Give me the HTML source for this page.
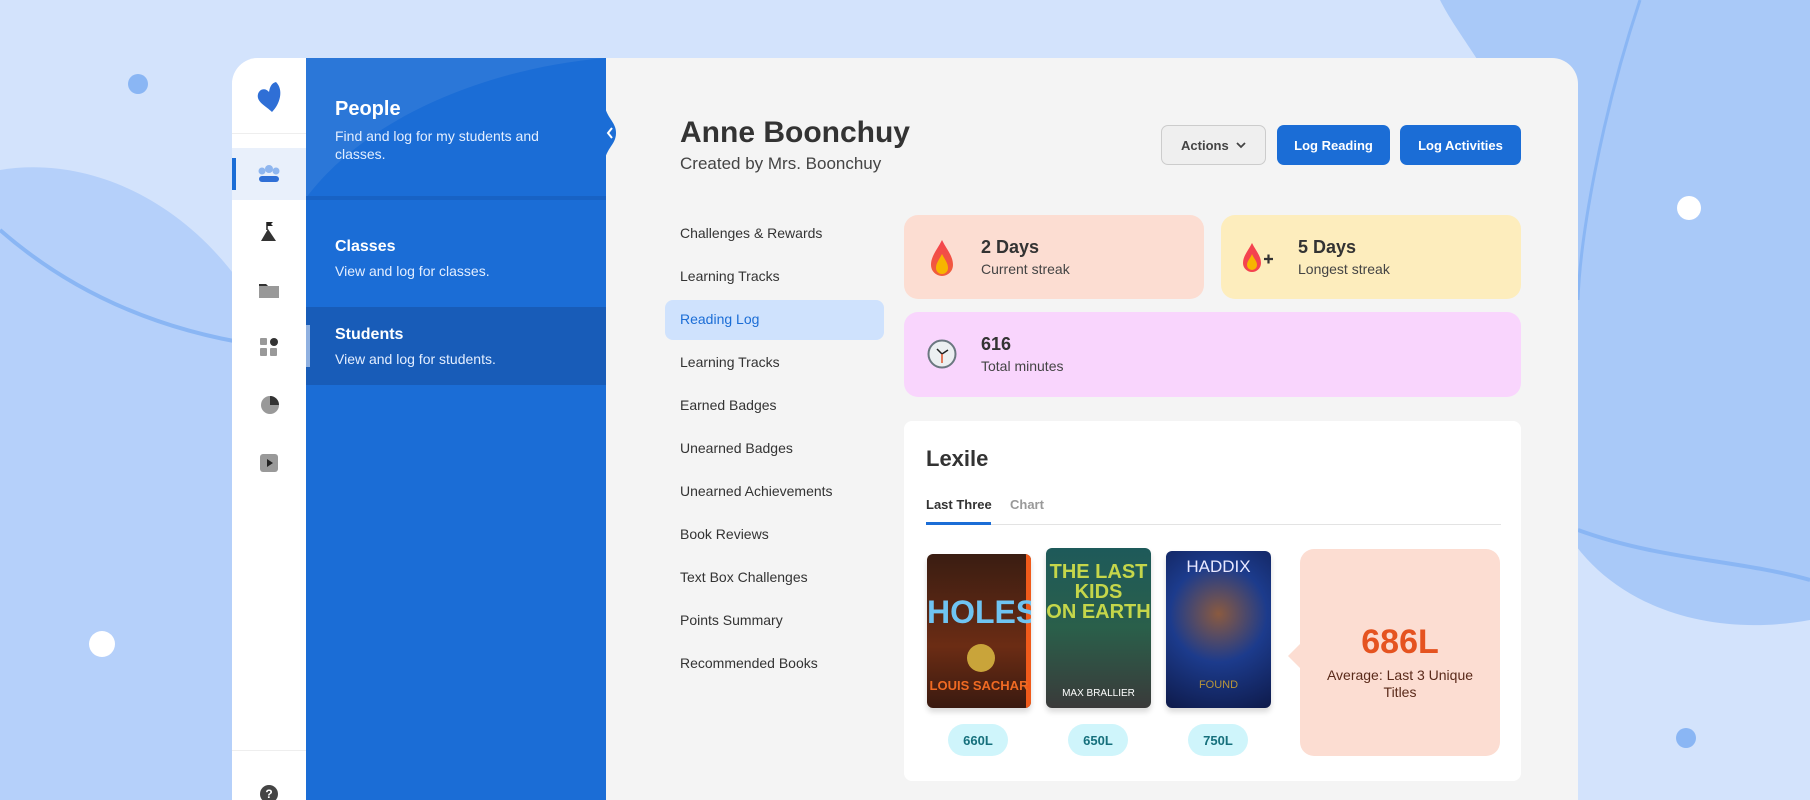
<!DOCTYPE html>
<html><head><meta charset="utf-8"><style>
*{box-sizing:border-box;margin:0;padding:0}
body{width:1810px;height:800px;overflow:hidden;font-family:"Liberation Sans",sans-serif;background:#d3e3fc;position:relative}
.abs{position:absolute}
.card{left:232px;top:58px;width:1346px;height:742px;border-radius:26px 26px 0 0;background:#f4f4f4;overflow:hidden}
.rail{left:0;top:0;width:74px;height:100%;background:#fff}
.blue{left:74px;top:0;width:300px;height:100%;background:#1b6dd6}
.blue h2{font-size:20px;color:#fff}
.blue p{font-size:14px;color:#e3eeff;margin-top:6px;line-height:18px}
.menu div{position:absolute;left:448px;font-size:14px;color:#333}
.btn{position:absolute;top:67px;height:40px;border-radius:7px;font-size:13px;font-weight:bold;display:flex;align-items:center;justify-content:center}
.stat{position:absolute;border-radius:14px}
.stat b{position:absolute;left:77px;top:22px;font-size:18px;color:#333}
.stat span{position:absolute;left:77px;top:46px;font-size:14px;color:#444}
.pill{position:absolute;top:303px;width:60px;height:32px;border-radius:16px;background:#cff5fb;color:#16707c;font-weight:bold;font-size:13px;display:flex;align-items:center;justify-content:center}
.book{position:absolute;border-radius:6px;overflow:hidden;box-shadow:0 4px 6px rgba(0,0,0,.15)}
</style></head><body>
<svg class="abs" style="left:0;top:0" width="1810" height="800">
<path d="M0 170 C120 150 260 240 300 420 C330 560 280 700 240 800 L0 800Z" fill="#b5d0fa"/>
<path d="M1440 0 L1810 0 L1810 620 C1700 640 1600 600 1560 520 C1500 400 1560 300 1520 150 C1500 80 1460 40 1440 0Z" fill="#a9c9f8"/>
<path d="M0 230 C80 300 180 340 300 350" stroke="#8ab6f4" stroke-width="4" fill="none"/>
<path d="M1578 530 C1660 560 1740 560 1810 580" stroke="#8ab6f4" stroke-width="4" fill="none"/>
<path d="M1640 0 C1600 120 1580 240 1578 300" stroke="#8ab6f4" stroke-width="3" fill="none"/>
<circle cx="138" cy="84" r="10" fill="#8ab6f4"/><circle cx="102" cy="644" r="13" fill="#fff"/>
<circle cx="1689" cy="208" r="12" fill="#fff"/><circle cx="1686" cy="738" r="10" fill="#8ab6f4"/>
</svg>
<div class="abs card">
 <div class="abs rail">
  <svg class="abs" style="left:22px;top:22px" width="30" height="34" viewBox="0 0 30 34"><path d="M22 2 C30 10 26 24 18 32 C12 26 2 22 4 14 C6 8 12 8 15 12 C16 6 18 3 22 2Z" fill="#2f6fd6"/></svg>
  <div class="abs" style="left:0;top:75px;width:74px;height:1px;background:#eee"></div>
  <div class="abs" style="left:0;top:90px;width:74px;height:52px;background:#e9f0fb"></div>
  <div class="abs" style="left:0;top:100px;width:4px;height:32px;background:#1b6dd6"></div>
  <svg class="abs" style="left:24px;top:106px" width="26" height="20"><circle cx="6" cy="7" r="3.5" fill="#8fb6ef"/><circle cx="13" cy="5" r="4" fill="#8fb6ef"/><circle cx="20" cy="7" r="3.5" fill="#8fb6ef"/><rect x="3" y="12" width="20" height="6" rx="3" fill="#2f6fd6"/></svg>
  <svg class="abs" style="left:27px;top:162px" width="20" height="22"><path d="M8 2v8" stroke="#222" stroke-width="1.5"/><path d="M8 2h6l-2 2 2 2H8z" fill="#222"/><path d="M2 21 L9 9 L17 21Z" fill="#333"/></svg>
  <svg class="abs" style="left:27px;top:223px" width="20" height="18"><path d="M0 3h7l2 2h11v12H0z" fill="#999"/><path d="M0 3h7l2 2H0z" fill="#333"/></svg>
  <svg class="abs" style="left:28px;top:280px" width="18" height="18"><rect x="0" y="0" width="7" height="7" rx="1" fill="#999"/><circle cx="14" cy="4" r="4" fill="#333"/><rect x="0" y="10" width="7" height="8" rx="1" fill="#999"/><rect x="10" y="10" width="7" height="8" rx="1" fill="#999"/></svg>
  <svg class="abs" style="left:28px;top:337px" width="20" height="20"><circle cx="10" cy="10" r="9" fill="#999"/><path d="M10 10V1a9 9 0 0 1 9 9z" fill="#333"/></svg>
  <svg class="abs" style="left:28px;top:396px" width="18" height="18"><rect width="18" height="18" rx="3" fill="#999"/><path d="M7 5l6 4-6 4z" fill="#222"/></svg>
  <div class="abs" style="left:0;top:692px;width:74px;height:1px;background:#eee"></div>
  <div class="abs" style="left:28px;top:727px;width:18px;height:18px;border-radius:9px;background:#444;color:#fff;font-size:12px;font-weight:bold;text-align:center;line-height:18px">?</div>
 </div>
 <div class="abs blue">
  <svg class="abs" style="left:0;top:0" width="300" height="140"><path d="M0 140 C60 60 180 10 300 0 L0 0Z" fill="rgba(255,255,255,.07)"/></svg>
  <div class="abs" style="left:29px;top:40px;width:250px"><h2>People</h2><p>Find and log for my students and classes.</p></div>
  <div class="abs" style="left:0;top:138px;width:300px;height:4px;background:#1862c4"></div>
  <div class="abs" style="left:29px;top:180px"><h2 style="font-size:16px">Classes</h2><p>View and log for classes.</p></div>
  <div class="abs" style="left:0;top:249px;width:300px;height:78px;background:#185cb8"></div>
  <div class="abs" style="left:0;top:267px;width:4px;height:42px;background:#8fb0e0"></div>
  <div class="abs" style="left:29px;top:268px"><h2 style="font-size:16px">Students</h2><p>View and log for students.</p></div>
 </div>
 <svg class="abs" style="left:372px;top:40px" width="20" height="70"><path d="M0 0 C0 20 12 22 12 35 C12 48 0 50 0 70Z" fill="#1b6dd6"/><path d="M8 30l-4 5 4 5" stroke="#fff" stroke-width="2" fill="none"/></svg>
 <div class="abs" style="left:448px;top:58px;font-size:30px;font-weight:bold;color:#333">Anne Boonchuy</div>
 <div class="abs" style="left:448px;top:96px;font-size:17px;color:#444">Created by Mrs. Boonchuy</div>
 <div class="btn" style="left:929px;width:105px;background:#efefef;border:1px solid #ccc;color:#444">Actions&nbsp;&nbsp;<svg width="10" height="7"><path d="M1 1l4 4 4-4" stroke="#444" stroke-width="1.8" fill="none"/></svg></div>
 <div class="btn" style="left:1045px;width:113px;background:#1b6dd6;color:#fff">Log Reading</div>
 <div class="btn" style="left:1168px;width:121px;background:#1b6dd6;color:#fff">Log Activities</div>
 <div class="abs" style="left:433px;top:242px;width:219px;height:40px;border-radius:8px;background:#cfe2fd"></div>
 <div class="menu">
  <div style="top:167px">Challenges &amp; Rewards</div><div style="top:210px">Learning Tracks</div>
  <div style="top:253px;color:#1b6dd6">Reading Log</div><div style="top:296px">Learning Tracks</div>
  <div style="top:339px">Earned Badges</div><div style="top:382px">Unearned Badges</div>
  <div style="top:425px">Unearned Achievements</div><div style="top:468px">Book Reviews</div>
  <div style="top:511px">Text Box Challenges</div><div style="top:554px">Points Summary</div>
  <div style="top:597px">Recommended Books</div>
 </div>
 <div class="stat" style="left:672px;top:157px;width:300px;height:84px;background:#fcddd2">
  <svg class="abs" style="left:27px;top:25px" width="22" height="36"><defs><linearGradient id="f" x1="0" y1="0" x2="0" y2="1"><stop offset="0" stop-color="#f4434f"/><stop offset="1" stop-color="#f0603a"/></linearGradient></defs><path d="M11 0 C16 10 22 16 22 25 A11 11 0 0 1 0 25 C0 16 6 10 11 0Z" fill="url(#f)"/><path d="M11 14 C14 20 17 23 17 28 A6 6 0 0 1 5 28 C5 23 8 20 11 14Z" fill="#f7b500"/></svg>
  <b>2 Days</b><span>Current streak</span></div>
 <div class="stat" style="left:989px;top:157px;width:300px;height:84px;background:#fdedbd">
  <svg class="abs" style="left:22px;top:28px" width="36" height="30"><path d="M9 0 C13 8 18 13 18 20 A9 9 0 0 1 0 20 C0 13 5 8 9 0Z" fill="#f4434f"/><path d="M9 11 C11 16 14 18 14 22 A5 5 0 0 1 4 22 C4 18 7 16 9 11Z" fill="#f7b500"/><path d="M21 16h9M25.5 11.5v9" stroke="#333" stroke-width="2.2"/></svg>
  <b>5 Days</b><span>Longest streak</span></div>
 <div class="stat" style="left:672px;top:254px;width:617px;height:85px;background:#f9d5fd">
  <svg class="abs" style="left:23px;top:26px" width="30" height="33"><circle cx="15" cy="16" r="13.5" fill="#eceff1" stroke="#6b7780" stroke-width="2"/><path d="M15 16l-5-5M15 16l6-4" stroke="#222" stroke-width="1.5"/><path d="M15 16v9" stroke="#e0522a" stroke-width="1.5"/></svg>
  <b>616</b><span>Total minutes</span></div>
 <div class="abs" style="left:672px;top:363px;width:617px;height:360px;background:#fff;border-radius:8px">
  <div class="abs" style="left:22px;top:25px;font-size:22px;font-weight:bold;color:#333">Lexile</div>
  <div class="abs" style="left:22px;top:76px;font-size:13px;font-weight:bold;color:#333">Last Three</div>
  <div class="abs" style="left:106px;top:76px;font-size:13px;font-weight:bold;color:#999">Chart</div>
  <div class="abs" style="left:22px;top:103px;width:575px;height:1px;background:#e3e3e3"></div>
  <div class="abs" style="left:22px;top:101px;width:65px;height:3px;background:#1b6dd6"></div>
  <div class="book" style="left:23px;top:133px;width:104px;height:154px;background:linear-gradient(#3a1d12,#6b2c14 60%,#3a1a10)">
   <div class="abs" style="right:0;top:0;width:5px;height:100%;background:#f05a1a"></div>
   <div class="abs" style="left:0;width:100%;top:40px;text-align:center;font-size:32px;font-weight:bold;color:#6fc4f2">HOLES</div>
   <div class="abs" style="left:40px;top:90px;width:28px;height:28px;border-radius:14px;background:#c9a43a"></div>
   <div class="abs" style="left:0;width:100%;top:124px;text-align:center;font-size:13px;font-weight:bold;color:#f06a23">LOUIS SACHAR</div></div>
  <div class="book" style="left:142px;top:127px;width:105px;height:160px;background:linear-gradient(#1e5a5a,#2a5f4a 50%,#3a3a3a)">
   <div class="abs" style="left:0;width:100%;top:14px;text-align:center;font-size:20px;line-height:20px;font-weight:bold;color:#c5d64a">THE LAST<br>KIDS<br>ON EARTH</div>
   <div class="abs" style="left:0;width:100%;top:140px;text-align:center;font-size:10px;color:#fff">MAX BRALLIER</div></div>
  <div class="book" style="left:262px;top:130px;width:105px;height:157px;background:radial-gradient(circle at 50% 40%,#8a5a40,#1c3b8c 45%,#0e1a4a)">
   <div class="abs" style="left:0;width:100%;top:6px;text-align:center;font-size:17px;color:#e8e8ff">HADDIX</div>
   <div class="abs" style="left:0;width:100%;top:128px;text-align:center;font-size:11px;color:#b8953a">FOUND</div></div>
  <div class="pill" style="left:44px">660L</div><div class="pill" style="left:164px">650L</div><div class="pill" style="left:284px">750L</div>
  <div class="abs" style="left:396px;top:128px;width:200px;height:207px;border-radius:14px;background:#fcddd2">
   <div class="abs" style="left:-12px;top:95px;width:0;height:0;border-top:12px solid transparent;border-bottom:12px solid transparent;border-right:12px solid #fcddd2"></div>
   <div class="abs" style="left:0;width:100%;top:74px;text-align:center;font-size:34px;font-weight:bold;color:#e55320">686L</div>
   <div class="abs" style="left:20px;width:160px;top:118px;text-align:center;font-size:14px;color:#5a2a1a;line-height:17px">Average: Last 3 Unique Titles</div></div>
 </div>
</div>
</body></html>
